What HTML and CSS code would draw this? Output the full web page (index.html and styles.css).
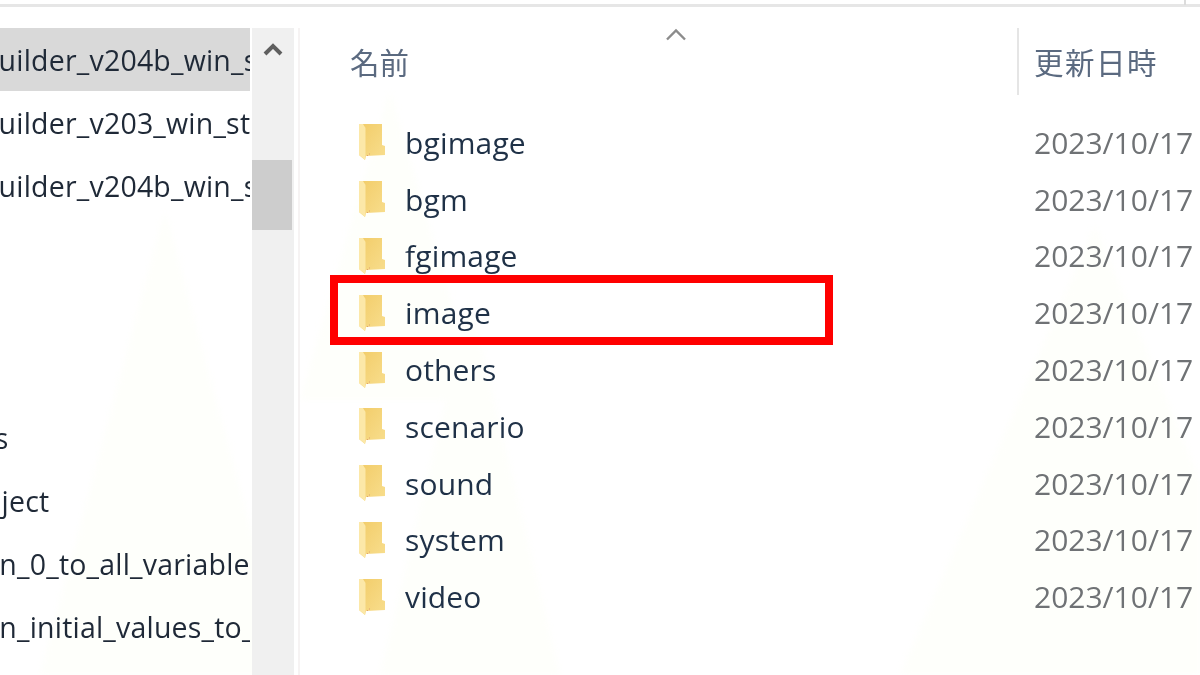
FILE: index.html
```html
<!DOCTYPE html>
<html lang="ja">
<head>
<meta charset="utf-8">
<title>エクスプローラー</title>
<link rel="stylesheet" href="styles.css">
</head>
<body>
<svg class="wash" viewBox="0 0 1200 675" aria-hidden="true">
  <path d="M40 675 L165 210 L290 675Z M380 675 L470 300 L560 675Z M900 675 L1095 225 L1200 480 L1200 675Z M300 400 L390 90 L480 400Z"/>
</svg>
<svg width="0" height="0" class="defs" aria-hidden="true">
  <defs>
    <linearGradient id="fold" x1="0" y1="0" x2="1" y2="1">
      <stop offset="0" stop-color="#f2cc68"/>
      <stop offset="1" stop-color="#f8de8e"/>
    </linearGradient>
    <symbol id="folder" viewBox="0 0 26 36">
      <path d="M0 0H23V21L26 22V31L7 32L6 36L0 31Z" fill="url(#fold)"/>
      <path d="M0 0H4L6.500 4V32L6 36L0 31Z" fill="#fce8a8"/>
      <path d="M8 31h1v1h-1zM10 29.500h1v1h-1z" fill="#e0a070"/>
    </symbol>
  </defs>
</svg>
<div class="topbar"><div class="topbar-line"></div><div class="topbar-tick"></div></div>
<div class="window">
  <nav class="tree">
    <div class="tree-list">
      <div class="tree-row selected"><span class="clip">Builder_v204b_win_st</span></div>
      <div class="tree-row"><span class="clip">Builder_v203_win_st</span></div>
      <div class="tree-row"><span class="clip">Builder_v204b_win_st</span></div>
      <div class="tree-row"></div>
      <div class="tree-row"><span class="clip colon">:</span></div>
      <div class="tree-row"></div>
      <div class="tree-row"><span class="clip short">ss</span></div>
      <div class="tree-row"><span class="clip short2">Project</span></div>
      <div class="tree-row"><span class="clip longer">on_0_to_all_variables</span></div>
      <div class="tree-row"><span class="clip longer">on_initial_values_to_all</span></div>
    </div>
    <div class="scrollbar">
      <div class="scroll-up">
        <svg width="20" height="14" viewBox="0 0 20 14"><path d="M2 12L10 4L18 12" fill="none" stroke="#5f5f5f" stroke-width="4"/></svg>
      </div>
      <div class="scroll-thumb"></div>
    </div>
  </nav>
  <main class="files">
    <header class="file-head">
      <div class="col-name">名前<svg class="sort" width="22" height="13" viewBox="0 0 22 13"><path d="M2 11.500L11 2.500L20 11.500" fill="none" stroke="#8c8c8c" stroke-width="2.400"/></svg></div>
      <div class="col-date">更新日時</div>
    </header>
    <div class="file-list">
      <div class="file-row"><svg class="ico"><use href="#folder"/></svg><span class="fname">bgimage</span><span class="fdate">2023/10/17</span></div>
      <div class="file-row"><svg class="ico"><use href="#folder"/></svg><span class="fname">bgm</span><span class="fdate">2023/10/17</span></div>
      <div class="file-row"><svg class="ico"><use href="#folder"/></svg><span class="fname">fgimage</span><span class="fdate">2023/10/17</span></div>
      <div class="file-row"><svg class="ico"><use href="#folder"/></svg><span class="fname">image</span><span class="fdate">2023/10/17</span></div>
      <div class="file-row"><svg class="ico"><use href="#folder"/></svg><span class="fname">others</span><span class="fdate">2023/10/17</span></div>
      <div class="file-row"><svg class="ico"><use href="#folder"/></svg><span class="fname">scenario</span><span class="fdate">2023/10/17</span></div>
      <div class="file-row"><svg class="ico"><use href="#folder"/></svg><span class="fname">sound</span><span class="fdate">2023/10/17</span></div>
      <div class="file-row"><svg class="ico"><use href="#folder"/></svg><span class="fname">system</span><span class="fdate">2023/10/17</span></div>
      <div class="file-row"><svg class="ico"><use href="#folder"/></svg><span class="fname">video</span><span class="fdate">2023/10/17</span></div>
    </div>
  </main>
</div>
<div class="highlight"></div>
</body>
</html>
```
FILE: styles.css
```css
html, body {
  margin: 0;
  padding: 0;
  width: 1200px;
  height: 675px;
  overflow: hidden;
  background: #ffffff;
}
body {
  position: relative;
  font-family: "Open Sans", "Noto Sans", "Noto Sans CJK JP", sans-serif;
  display: flex;
  flex-direction: column;
}
.defs { position: absolute; }
.wash {
  position: absolute;
  left: 0;
  top: 0;
  width: 1200px;
  height: 675px;
  filter: blur(3px);
}
.wash path { fill: #fefffb; }
.topbar {
  height: 28px;
  flex: none;
  position: relative;
}
.topbar-line {
  height: 3px;
  margin-top: 4px;
  background: #e6e6e6;
}
.topbar-tick {
  position: absolute;
  left: 1184px;
  top: 0;
  width: 2px;
  height: 5px;
  background: #dcdcdc;
}
.window {
  flex: 1;
  display: flex;
  min-height: 0;
  position: relative;
}
.tree {
  width: 298px;
  flex: none;
  display: flex;
  border-right: 2px solid #f6f3f3;
  box-sizing: content-box;
}
.tree-list {
  width: 250px;
  flex: none;
  overflow: hidden;
}
.tree-row {
  height: 63px;
  display: flex;
  align-items: center;
  overflow: hidden;
  font-size: 28.500px;
  letter-spacing: 0.200px;
  color: #1f2937;
  white-space: nowrap;
  filter: blur(0.4px);
}
.tree-row.selected { background: #d9d9d9; }
.clip { margin-left: -20px; }
.clip.longer { margin-left: -18px; }
.clip.short { margin-left: -19px; }
.clip.short2 { margin-left: -45px; }
.clip.colon { margin-left: -7px; }
.scrollbar {
  margin-left: 2px;
  width: 42px;
  background: #f0f0f0;
  display: flex;
  flex-direction: column;
}
.scroll-up {
  height: 50px;
  display: flex;
  justify-content: center;
  align-items: flex-start;
  padding-top: 14px;
  box-sizing: border-box;
}
.scroll-thumb {
  margin-top: 82px;
  height: 70px;
  width: 40px;
  background: #cdcdcd;
}
.files {
  flex: 1;
  min-width: 0;
}
.file-head {
  display: flex;
  height: 67px;
  font-size: 29.500px;
  color: #5b6a80;
  filter: blur(0.4px);
}
.col-name {
  width: 717px;
  padding-left: 50px;
  box-sizing: border-box;
  line-height: 70px;
  position: relative;
}
.sort {
  position: absolute;
  left: 365px;
  top: 0;
  filter: blur(0.6px);
}
.col-date {
  flex: 1;
  border-left: 2px solid #e5e5e5;
  padding-left: 15px;
  line-height: 70px;
  letter-spacing: 1.500px;
  white-space: nowrap;
}
.file-list {
  padding-top: 19px;
}
.file-row {
  height: 56.800px;
  display: flex;
  align-items: center;
  padding-left: 59px;
  font-size: 30px;
  white-space: nowrap;
}
.ico {
  width: 26px;
  height: 36px;
  flex: none;
  margin-right: 20px;
  filter: blur(0.5px);
}
.fname {
  width: 629px;
  flex: none;
  color: #1f3147;
  letter-spacing: 0.150px;
  filter: blur(0.4px);
}
.fdate {
  color: #6f7275;
  filter: blur(0.4px);
}
.highlight {
  position: absolute;
  left: 330px;
  top: 275px;
  width: 503px;
  height: 70px;
  box-sizing: border-box;
  border: 8px solid #ff0000;
}
```
